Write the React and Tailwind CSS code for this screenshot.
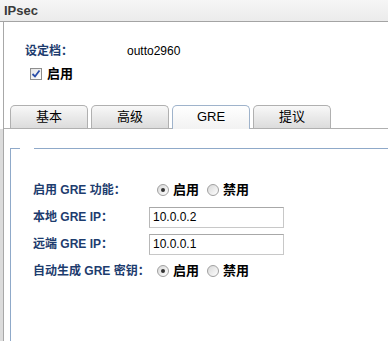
const FONT = { fontFamily: '"Liberation Sans", "Noto Sans CJK SC", sans-serif' }

const TABS = ['基本', '高级', 'GRE', '提议']

function Radio({ checked }) {
  return (
    <span className="relative inline-block h-[12px] w-[12px] rounded-full border border-[#a0a0a0] bg-gradient-to-br from-[#d8d8d8] to-[#ffffff]">
      {checked && (
        <span className="absolute left-[3px] top-[3px] h-[4px] w-[4px] rounded-full bg-[#333]" />
      )}
    </span>
  )
}

function RadioPair() {
  return (
    <div className="flex items-center pl-[8px] text-[13px] font-bold text-black">
      <Radio checked />
      <span className="ml-[4px]">启用</span>
      <span className="ml-[8px] flex"><Radio /></span>
      <span className="ml-[4px]">禁用</span>
    </div>
  )
}

function TextBox({ value }) {
  return (
    <div className="flex h-[21px] w-[135px] items-center border border-[#c8c8c8] border-t-[#a8a8a8] border-l-[#b8b8b8] bg-white px-[3px] text-[12px] text-black">
      {value}
    </div>
  )
}

function Label({ children }) {
  return (
    <div className="flex h-[27px] items-center whitespace-nowrap text-[12px] font-bold text-[#1d3c6e]">
      {children}
    </div>
  )
}

export default function App() {
  return (
    <div className="h-[341px] w-[388px] overflow-hidden bg-white" style={FONT}>
      {/* title bar */}
      <div className="flex h-[22px] items-center border-b border-[#a4a4a4] bg-gradient-to-b from-[#f6f6f6] to-[#ebebeb] pl-[4px] text-[13px] font-bold text-[#3a3a3a]">
        IPsec
      </div>

      {/* upper area */}
      <div className="ml-[3px] border-l border-[#a8a8a8]">
        <div className="flex items-center pl-[21px] pt-[20px] text-[12px]">
          <span className="w-[102px] font-bold text-[#1d3c6e]">设定档：</span>
          <span className="text-black">outto2960</span>
        </div>
        <div className="mt-[4px] flex items-center pl-[26px] text-[13px] font-bold text-black">
          <span className="relative h-[12px] w-[12px] border border-[#8e8e8e] bg-gradient-to-br from-[#e4e4e4] to-[#ffffff]">
            <svg viewBox="0 0 12 12" className="absolute -left-px -top-px h-[12px] w-[12px]">
              <path d="M2.5 6 L5 8.5 L9.5 2.5" fill="none" stroke="#2a4ea8" strokeWidth="1.8" />
            </svg>
          </span>
          <span className="ml-[5px]">启用</span>
        </div>

        {/* tabs */}
        <div className="mt-[21px] flex gap-[3px] border-b border-[#b0b0b0] pl-[6px]">
          {TABS.map((t) => {
            const active = t === 'GRE'
            return (
              <div
                key={t}
                className={
                  active
                    ? 'relative -mb-px flex h-[24px] w-[78px] items-center justify-center rounded-t-[5px] border border-b-0 border-[#9fb3cb] bg-gradient-to-b from-[#ffffff] to-[#f2f2f2] text-[13px] text-black'
                    : 'flex h-[23px] w-[78px] items-center justify-center rounded-t-[5px] border border-b-0 border-[#b0b0b0] bg-gradient-to-b from-[#f8f8f8] to-[#dcdcdc] text-[13px] text-black'
                }
              >
                {t}
              </div>
            )
          })}
        </div>
      </div>

      {/* lower panel */}
      <div className="h-[220px] border-l-[3px] border-[#dcdcdc]">
        <div className="h-full border-l border-[#a8a8a8] pl-[6px] pt-[19px]">
          <div className="h-full border-l border-[#8fa9c9]">
            <div className="flex">
              <div className="w-[9px] border-t border-[#8fa9c9]" />
              <div className="w-[14px]" />
              <div className="flex-1 border-t border-[#8fa9c9]" />
            </div>
            <div className="grid grid-cols-[116px_1fr] pl-[22px] pt-[28px]">
              <Label>启用 GRE 功能：</Label>
              <div className="flex h-[27px] items-center"><RadioPair /></div>

              <Label>本地 GRE IP：</Label>
              <div className="flex h-[27px] items-center"><TextBox value="10.0.0.2" /></div>

              <Label>远端 GRE IP：</Label>
              <div className="flex h-[27px] items-center"><TextBox value="10.0.0.1" /></div>

              <Label>自动生成 GRE 密钥：</Label>
              <div className="flex h-[27px] items-center"><RadioPair /></div>
            </div>
          </div>
        </div>
      </div>
    </div>
  )
}
